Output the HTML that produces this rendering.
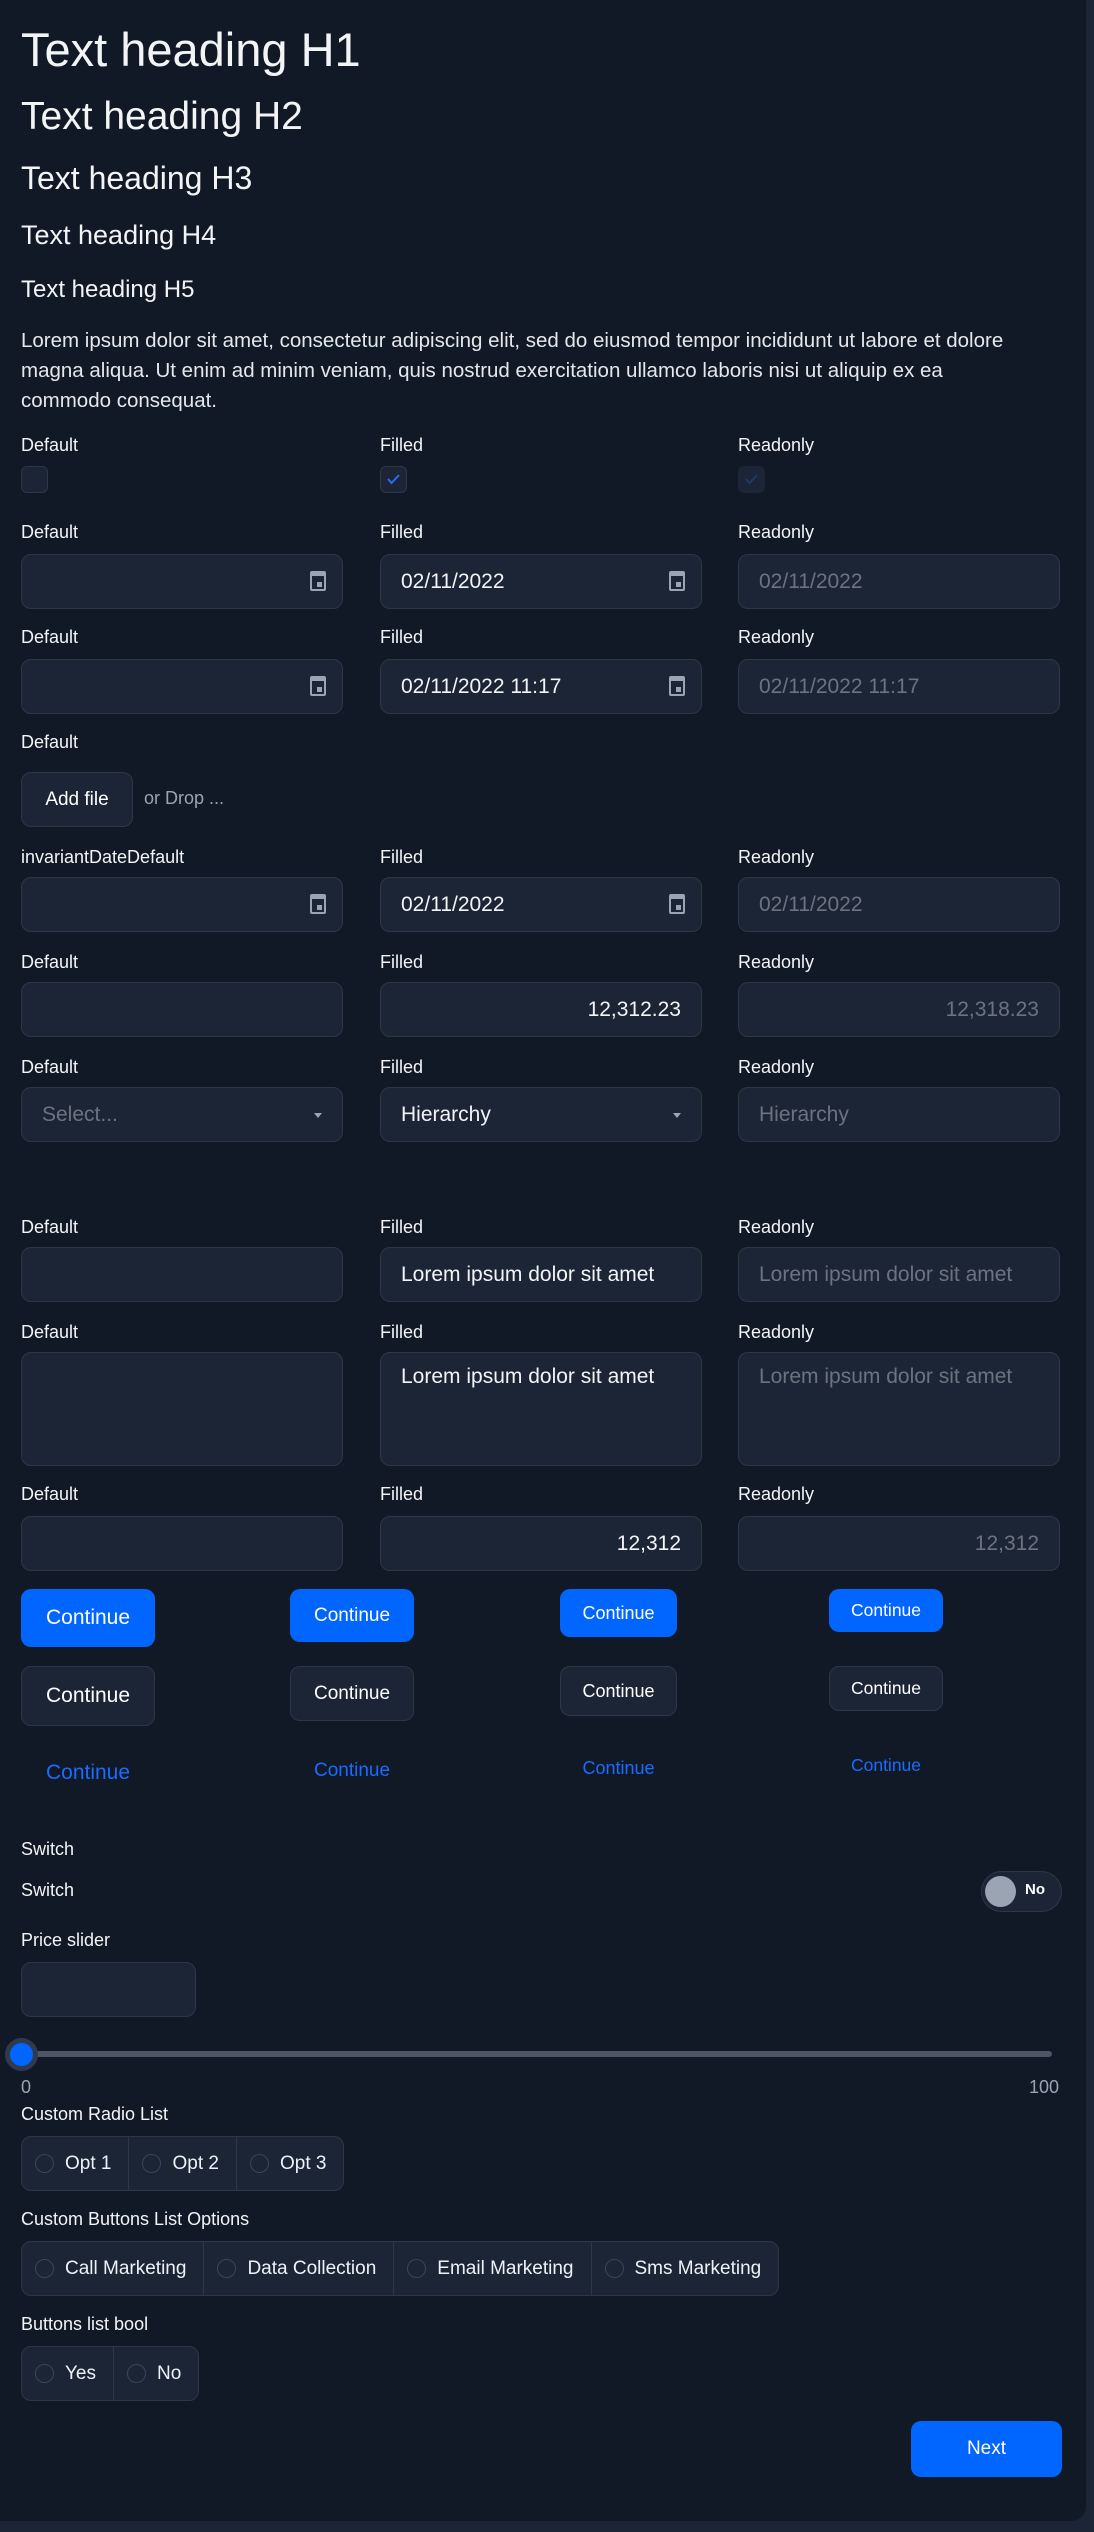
<!DOCTYPE html>
<html><head><meta charset="utf-8"><style>
*{box-sizing:border-box;margin:0;padding:0}
body{width:1094px;height:2532px;background:#1c2536;font-family:"Liberation Sans",sans-serif;color:#edf2f7;position:relative;overflow:hidden}
.card{position:absolute;left:0;top:0;width:1086px;height:2521px;background:#111927;border-radius:0 0 14px 0}
.a{position:absolute}
.h{position:absolute;left:21px;color:#f3f4f6;white-space:nowrap}
.lbl{position:absolute;font-size:18px;font-weight:500;color:#f3f4f6;white-space:nowrap}
.in{position:absolute;width:322px;height:55px;background:#1c2536;border:1.5px solid #2f3746;border-radius:10px;font-size:21px;color:#f3f4f6;display:flex;align-items:center;padding:0 20px}
.ro{color:#6c737f}
.cal{position:absolute;right:16px;top:50%;margin-top:-11px;width:16px;height:20px;border:2px solid #9aa4b2;border-top-width:5px;border-radius:2px}
.cal:after{content:"";position:absolute;right:2px;bottom:2px;width:5px;height:5px;background:#9aa4b2}
.arr{position:absolute;right:20px;top:50%;margin-top:-2px;border:4px solid transparent;border-top:5px solid #9aa4b2;border-bottom:0}
.btn{position:absolute;border-radius:10px;display:flex;align-items:center;justify-content:center;font-weight:500;color:#fff}
.pb{background:#0066ff}
.ob{background:#1c2536;border:1.5px solid #2f3746}
.tb{color:#1a6bff}
.grp{position:absolute;height:55px;background:#1c2536;border:1.5px solid #2f3746;border-radius:10px;display:flex}
.grp div{display:flex;align-items:center;padding:0 17px 0 13px;font-size:19px;font-weight:500;border-right:1.5px solid #2f3746;white-space:nowrap}
.grp div:last-child{border-right:0}
.grp i{display:inline-block;width:19px;height:19px;border:1.5px solid #3a4556;border-radius:50%;margin-right:11px}
.cb{position:absolute;width:27px;height:27px;border:1.5px solid #2f3746;border-radius:6px;background:#1c2536}
</style></head><body>
<div class="card"></div>
<div class="h" style="top:22px;font-size:47px">Text heading H1</div>
<div class="h" style="top:95px;font-size:39px">Text heading H2</div>
<div class="h" style="top:160px;font-size:32px">Text heading H3</div>
<div class="h" style="top:220px;font-size:27px;font-weight:500">Text heading H4</div>
<div class="h" style="top:276px;font-size:24px;font-weight:500">Text heading H5</div>
<div class="a" style="left:21px;top:326px;width:1030px;font-size:20.5px;line-height:30px;color:#e5e7eb">Lorem ipsum dolor sit amet, consectetur adipiscing elit, sed do eiusmod tempor incididunt ut labore et dolore magna aliqua. Ut enim ad minim veniam, quis nostrud exercitation ullamco laboris nisi ut aliquip ex ea<br>commodo consequat.</div>

<div class="lbl" style="left:21px;top:435px">Default</div><div class="lbl" style="left:380px;top:435px">Filled</div><div class="lbl" style="left:738px;top:435px">Readonly</div>
<div class="cb" style="left:21px;top:466px"></div>
<div class="cb" style="left:380px;top:466px"><svg width="24" height="24" style="position:absolute;left:0;top:0"><path d="M7 12l3.5 4L18 8" stroke="#2970ff" stroke-width="1.8" fill="none"/></svg></div>
<div class="cb" style="left:738px;top:466px;border-color:#1c2536"><svg width="24" height="24" style="position:absolute;left:0;top:0"><path d="M7 12l3.5 4L18 8" stroke="#1f3a6b" stroke-width="1.8" fill="none"/></svg></div>

<div class="lbl" style="left:21px;top:522px">Default</div><div class="lbl" style="left:380px;top:522px">Filled</div><div class="lbl" style="left:738px;top:522px">Readonly</div>
<div class="in" style="left:21px;top:554px"><span class="cal"></span></div>
<div class="in" style="left:380px;top:554px">02/11/2022<span class="cal"></span></div>
<div class="in ro" style="left:738px;top:554px">02/11/2022</div>

<div class="lbl" style="left:21px;top:627px">Default</div><div class="lbl" style="left:380px;top:627px">Filled</div><div class="lbl" style="left:738px;top:627px">Readonly</div>
<div class="in" style="left:21px;top:659px"><span class="cal"></span></div>
<div class="in" style="left:380px;top:659px">02/11/2022 11:17<span class="cal"></span></div>
<div class="in ro" style="left:738px;top:659px">02/11/2022 11:17</div>

<div class="lbl" style="left:21px;top:732px">Default</div>
<div class="btn ob" style="left:21px;top:772px;width:112px;height:55px;font-size:19px">Add file</div>
<div class="a" style="left:144px;top:788px;font-size:18px;color:#9aa4b2">or Drop ...</div>

<div class="lbl" style="left:21px;top:847px">invariantDateDefault</div><div class="lbl" style="left:380px;top:847px">Filled</div><div class="lbl" style="left:738px;top:847px">Readonly</div>
<div class="in" style="left:21px;top:877px"><span class="cal"></span></div>
<div class="in" style="left:380px;top:877px">02/11/2022<span class="cal"></span></div>
<div class="in ro" style="left:738px;top:877px">02/11/2022</div>

<div class="lbl" style="left:21px;top:952px">Default</div><div class="lbl" style="left:380px;top:952px">Filled</div><div class="lbl" style="left:738px;top:952px">Readonly</div>
<div class="in" style="left:21px;top:982px"></div>
<div class="in" style="left:380px;top:982px;justify-content:flex-end">12,312.23</div>
<div class="in ro" style="left:738px;top:982px;justify-content:flex-end">12,318.23</div>

<div class="lbl" style="left:21px;top:1057px">Default</div><div class="lbl" style="left:380px;top:1057px">Filled</div><div class="lbl" style="left:738px;top:1057px">Readonly</div>
<div class="in ro" style="left:21px;top:1087px">Select...<span class="arr"></span></div>
<div class="in" style="left:380px;top:1087px">Hierarchy<span class="arr"></span></div>
<div class="in ro" style="left:738px;top:1087px">Hierarchy</div>

<div class="lbl" style="left:21px;top:1217px">Default</div><div class="lbl" style="left:380px;top:1217px">Filled</div><div class="lbl" style="left:738px;top:1217px">Readonly</div>
<div class="in" style="left:21px;top:1247px"></div>
<div class="in" style="left:380px;top:1247px;font-weight:500">Lorem ipsum dolor sit amet</div>
<div class="in ro" style="left:738px;top:1247px">Lorem ipsum dolor sit amet</div>

<div class="lbl" style="left:21px;top:1322px">Default</div><div class="lbl" style="left:380px;top:1322px">Filled</div><div class="lbl" style="left:738px;top:1322px">Readonly</div>
<div class="in" style="left:21px;top:1352px;height:114px"></div>
<div class="in" style="left:380px;top:1352px;height:114px;align-items:flex-start;padding-top:12px;font-weight:500">Lorem ipsum dolor sit amet</div>
<div class="in ro" style="left:738px;top:1352px;height:114px;align-items:flex-start;padding-top:12px">Lorem ipsum dolor sit amet</div>

<div class="lbl" style="left:21px;top:1484px">Default</div><div class="lbl" style="left:380px;top:1484px">Filled</div><div class="lbl" style="left:738px;top:1484px">Readonly</div>
<div class="in" style="left:21px;top:1516px"></div>
<div class="in" style="left:380px;top:1516px;justify-content:flex-end;font-weight:500">12,312</div>
<div class="in ro" style="left:738px;top:1516px;justify-content:flex-end">12,312</div>

<div class="btn pb" style="left:21px;top:1589px;width:134px;height:58px;font-size:21px">Continue</div>
<div class="btn pb" style="left:290px;top:1589px;width:124px;height:53px;font-size:19px">Continue</div>
<div class="btn pb" style="left:560px;top:1589px;width:117px;height:48px;font-size:18px">Continue</div>
<div class="btn pb" style="left:829px;top:1589px;width:114px;height:43px;font-size:17.5px">Continue</div>
<div class="btn ob" style="left:21px;top:1666px;width:134px;height:60px;font-size:21px">Continue</div>
<div class="btn ob" style="left:290px;top:1666px;width:124px;height:55px;font-size:19px">Continue</div>
<div class="btn ob" style="left:560px;top:1666px;width:117px;height:50px;font-size:18px">Continue</div>
<div class="btn ob" style="left:829px;top:1666px;width:114px;height:45px;font-size:17.5px">Continue</div>
<div class="btn tb" style="left:21px;top:1748px;width:134px;height:50px;font-size:21px">Continue</div>
<div class="btn tb" style="left:290px;top:1748px;width:124px;height:46px;font-size:19px">Continue</div>
<div class="btn tb" style="left:560px;top:1746px;width:117px;height:44px;font-size:18px">Continue</div>
<div class="btn tb" style="left:829px;top:1744px;width:114px;height:42px;font-size:17.5px">Continue</div>

<div class="lbl" style="left:21px;top:1839px">Switch</div>
<div class="lbl" style="left:21px;top:1880px">Switch</div>
<div class="a" style="left:981px;top:1871px;width:81px;height:41px;border-radius:21px;background:#1c2536;border:1.5px solid #2f3746">
<div class="a" style="left:3px;top:4px;width:31px;height:31px;border-radius:50%;background:#9aa4b2"></div>
<div class="a" style="left:43px;top:9px;font-size:15px;font-weight:700;color:#fff">No</div></div>

<div class="lbl" style="left:21px;top:1930px">Price slider</div>
<div class="in" style="left:21px;top:1962px;width:175px"></div>
<div class="a" style="left:30px;top:2051px;width:1022px;height:6px;background:#4d5666;border-radius:3px"></div>
<div class="a" style="left:5px;top:2038px;width:33px;height:33px;border-radius:50%;background:#0066ff;border:5px solid #2f3a4c"></div>
<div class="a" style="left:21px;top:2077px;font-size:18px;color:#9aa4b2">0</div>
<div class="a" style="left:1029px;top:2077px;font-size:18px;color:#9aa4b2">100</div>

<div class="lbl" style="left:21px;top:2104px">Custom Radio List</div>
<div class="grp" style="left:21px;top:2136px"><div><i></i>Opt 1</div><div><i></i>Opt 2</div><div><i></i>Opt 3</div></div>
<div class="lbl" style="left:21px;top:2209px">Custom Buttons List Options</div>
<div class="grp" style="left:21px;top:2241px"><div><i></i>Call Marketing</div><div><i></i>Data Collection</div><div><i></i>Email Marketing</div><div><i></i>Sms Marketing</div></div>
<div class="lbl" style="left:21px;top:2314px">Buttons list bool</div>
<div class="grp" style="left:21px;top:2346px"><div><i></i>Yes</div><div><i></i>No</div></div>

<div class="btn pb" style="left:911px;top:2421px;width:151px;height:56px;font-size:19px">Next</div>
</body></html>
